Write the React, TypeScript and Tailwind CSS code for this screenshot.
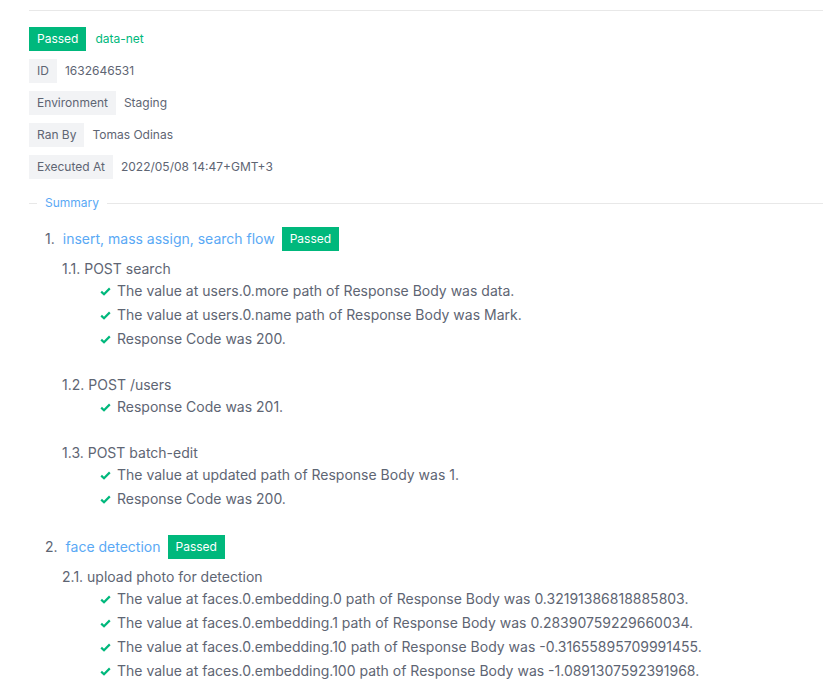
const meta = [
  { label: "ID", value: "1632646531" },
  { label: "Environment", value: "Staging" },
  { label: "Ran By", value: "Tomas Odinas" },
  { label: "Executed At", value: "2022/05/08 14:47+GMT+3" },
];

const flows = [
  {
    name: "insert, mass assign, search flow",
    steps: [
      {
        title: "POST search",
        checks: [
          "The value at users.0.more path of Response Body was data.",
          "The value at users.0.name path of Response Body was Mark.",
          "Response Code was 200.",
        ],
      },
      { title: "POST /users", checks: ["Response Code was 201."] },
      {
        title: "POST batch-edit",
        checks: ["The value at updated path of Response Body was 1.", "Response Code was 200."],
      },
    ],
  },
  {
    name: "face detection",
    steps: [
      {
        title: "upload photo for detection",
        checks: [
          "The value at faces.0.embedding.0 path of Response Body was 0.32191386818885803.",
          "The value at faces.0.embedding.1 path of Response Body was 0.28390759229660034.",
          "The value at faces.0.embedding.10 path of Response Body was -0.31655895709991455.",
          "The value at faces.0.embedding.100 path of Response Body was -1.0891307592391968.",
        ],
      },
    ],
  },
];

function Badge() {
  return (
    <span className="inline-flex h-6 items-center bg-[#00b87c] px-2 text-xs text-white">Passed</span>
  );
}

function CheckIcon() {
  return (
    <svg width="11" height="9" viewBox="0 0 11 9" className="shrink-0">
      <path d="M1.2 4.6 L4 7.2 L9.8 1.4" fill="none" stroke="#00b87c" strokeWidth="2.2" />
    </svg>
  );
}

export default function App() {
  return (
    <div className="h-[685px] overflow-hidden bg-white pl-[29px] pt-[10px] font-['Inter',sans-serif] text-[#5e6573]">
      <div className="border-t border-[#e8e8e8] pt-4">
        <div className="flex flex-col gap-2">
          <div className="flex items-center gap-[9px]">
            <Badge />
            <span className="text-xs text-[#00b87c]">data-net</span>
          </div>
          {meta.map((m) => (
            <div key={m.label} className="flex items-center gap-2 text-xs">
              <span className="flex h-6 items-center bg-[#f2f3f5] px-2">{m.label}</span>
              <span>{m.value}</span>
            </div>
          ))}
        </div>

        <div className="mt-[15px] flex items-center text-xs">
          <div className="h-px w-2 bg-[#e8e8e8]" />
          <span className="px-2 leading-[18px] text-[#5aa9f5]">Summary</span>
          <div className="h-px flex-1 bg-[#e8e8e8]" />
        </div>

        <ol className="mt-[15px] flex flex-col gap-[2px] pl-4 text-sm">
          {flows.map((f, i) => (
            <li key={f.name}>
              <div className="flex h-6 items-center">
                <span>{i + 1}.</span>
                <span className="ml-2 text-[#5aa9f5]">{f.name}</span>
                <span className="ml-[7px]">
                  <Badge />
                </span>
              </div>
              <div className="mt-[6px] pl-[17px]">
                {f.steps.map((s, j) => (
                  <div key={s.title} className="mb-[22px]">
                    <div className="h-6 leading-6">
                      {i + 1}.{j + 1}. {s.title}
                    </div>
                    <ul className="-mt-[2px] pl-[38px]">
                      {s.checks.map((c) => (
                        <li key={c} className="flex h-6 items-center gap-[6px]">
                          <CheckIcon />
                          <span>{c}</span>
                        </li>
                      ))}
                    </ul>
                  </div>
                ))}
              </div>
            </li>
          ))}
        </ol>
      </div>
    </div>
  );
}
